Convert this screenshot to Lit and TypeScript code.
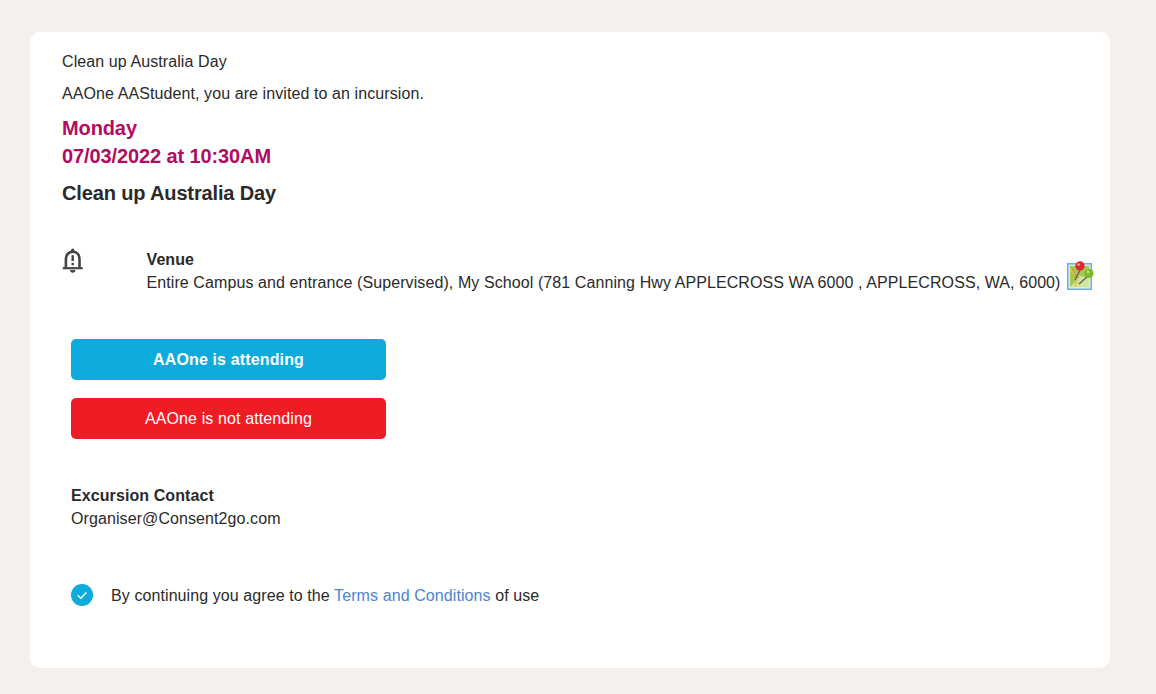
import { LitElement, html, css } from "lit";
import { customElement } from "lit/decorators.js";

@customElement("app-root")
export class AppRoot extends LitElement {
  static styles = css`
    :host {
      display: block;
      height: 694px;
      background: #f4f0ed;
      box-sizing: border-box;
      padding: 32px 46px 26px 30px;
      font-family: "Liberation Sans", Arial, sans-serif;
      font-size: 16px;
      letter-spacing: 0.09px;
      color: #2a2a2a;
      overflow: hidden;
    }
    .card {
      background: #fff;
      border-radius: 10px;
      height: 636px;
      box-sizing: border-box;
      padding: 21px 0 0 32px;
      display: flex;
      flex-direction: column;
      align-items: flex-start;
    }
    .line { line-height: 18px; height: 18px; white-space: nowrap; }
    .l2 { margin-top: 14px; }
    .when {
      margin-top: 11px;
      color: #b10c5f;
      font-weight: 700;
      font-size: 20px;
      line-height: 28px;
      letter-spacing: -0.11px;
    }
    .title {
      margin-top: 11px;
      font-weight: 700;
      font-size: 20px;
      line-height: 24px;
      letter-spacing: -0.14px;
    }
    .venue {
      margin-top: 43px;
      display: flex;
      align-items: flex-start;
      white-space: nowrap;
    }
    .bell { width: 22px; height: 26px; flex: none; margin: 0 62.5px 0 0; display: block; }
    .venue-name { font-weight: 700; line-height: 23px; }
    .venue-addr { display: flex; align-items: flex-start; line-height: 23px; }
    .map { width: 28px; height: 30px; flex: none; margin: -10px 0 0 5px; display: block; }
    .buttons {
      margin: 45px 0 0 9px;
      display: flex;
      flex-direction: column;
      gap: 18px;
    }
    .btn {
      width: 315px;
      height: 41px;
      border: 0;
      border-radius: 5px;
      padding: 0;
      color: #fff;
      font: inherit;
      letter-spacing: inherit;
      line-height: 41px;
      text-align: center;
    }
    .yes { background: #0dabdb; font-weight: 700; letter-spacing: 0.14px; }
    .no { background: #ef1b25; letter-spacing: 0.12px; }
    .contact { margin: 45px 0 0 9px; line-height: 23px; }
    .contact b { display: block; }
    .terms {
      margin: 54px 0 0 9px;
      display: flex;
      align-items: center;
      gap: 18px;
      line-height: 24px;
    }
    .check { width: 22px; height: 22px; flex: none; display: block; margin-bottom: 2px; }
    a { color: #4a86c8; text-decoration: none; }
  `;

  render() {
    return html`
      <div class="card">
        <div class="line">Clean up Australia Day</div>
        <div class="line l2">AAOne AAStudent, you are invited to an incursion.</div>
        <div class="when">Monday<br />07/03/2022 at 10:30AM</div>
        <div class="title">Clean up Australia Day</div>
        <div class="venue">
          <svg class="bell" viewBox="0 0 22 26" fill="none">
            <path d="M3.900 20V11C3.900 6.600 6.800 3.800 10.700 3.800s6.800 2.800 6.800 7.200V20" stroke="#444" stroke-width="2.600" />
            <path d="M.7 20.200h20" stroke="#444" stroke-width="2.200" />
            <path d="M8.800 3.500C8.800 -.6 12.600 -.6 12.600 3.500Z" fill="#444" />
            <path d="M8 22h5.400c0 3.600-5.400 3.600-5.400 0Z" fill="#444" />
            <path d="M10.700 7.200v5.800" stroke="#444" stroke-width="2.400" />
            <path d="M10.700 14.800v2.400" stroke="#444" stroke-width="2.400" />
          </svg>
          <div>
            <div class="venue-name">Venue</div>
            <div class="venue-addr">
              <span>Entire Campus and entrance (Supervised), My School (781 Canning Hwy APPLECROSS WA 6000 , APPLECROSS, WA, 6000)</span>
              <svg class="map" viewBox="0 0 28 30">
                <rect x="1" y="2" width="25" height="27" fill="#6db0dc" />
                <rect x="2.500" y="3.500" width="22" height="24" fill="#d6ecf8" />
                <rect x="4" y="5" width="19" height="21" fill="#a6c94a" />
                <path d="M4 26L15 15l8 2v9Z" fill="#d4e49a" />
                <path d="M4 8l8.500 7.500L9 26" fill="none" stroke="#e8c860" stroke-width="2" />
                <path d="M6 8l6 9" stroke="#d9534f" stroke-width="1" stroke-dasharray="2 1" />
                <path d="M14 9l-5 10M22 15l-9 8" stroke="#5a6a70" stroke-width="1.500" />
                <circle cx="14" cy="5" r="4.700" fill="#e0262c" />
                <circle cx="12.700" cy="3.600" r="1.400" fill="#f59a9a" />
                <circle cx="23" cy="12.500" r="4.600" fill="#7cb82e" />
                <circle cx="22" cy="11" r="1.300" fill="#c5e58e" />
              </svg>
            </div>
          </div>
        </div>
        <div class="buttons">
          <button class="btn yes">AAOne is attending</button>
          <button class="btn no">AAOne is not attending</button>
        </div>
        <div class="contact">
          <b>Excursion Contact</b>
          Organiser@Consent2go.com
        </div>
        <div class="terms">
          <svg class="check" viewBox="0 0 22 22">
            <circle cx="11" cy="11" r="11" fill="#0dabdb" />
            <path d="M6.800 11.300l3 3L15.400 8.600" fill="none" stroke="#fff" stroke-width="1.400" />
          </svg>
          <span>By continuing you agree to the <a href="#">Terms and Conditions</a> of use</span>
        </div>
      </div>
    `;
  }
}
